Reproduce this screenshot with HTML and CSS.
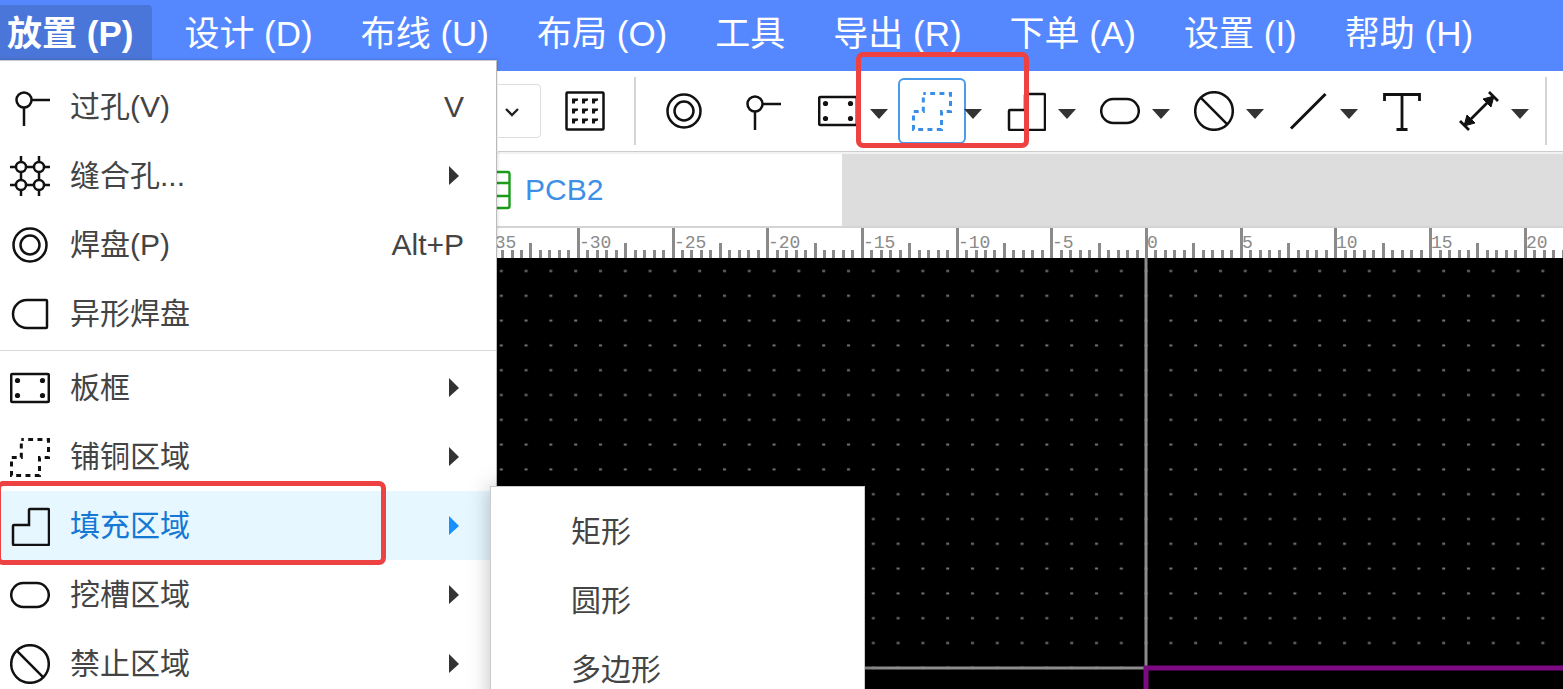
FILE: index.html
```html
<!DOCTYPE html>
<html lang="zh-CN">
<head>
    <meta charset="UTF-8">
    <meta name="viewport" content="width=device-width, initial-scale=1.0">
    <title>PCB2</title>
    <link rel="stylesheet" href="styles.css">
</head>
<body>
    <!-- shared icons, all on a 40x40 grid -->
    <svg class="sprite" aria-hidden="true">
        <symbol id="i-via" viewBox="0 0 40 40">
            <circle cx="14" cy="13" r="7.5"/>
            <path d="M21.5 13H40M14 20.5V39"/>
        </symbol>
        <symbol id="i-stitch" viewBox="0 0 40 40">
            <circle cx="11" cy="11" r="5"/>
            <circle cx="29" cy="11" r="5"/>
            <circle cx="11" cy="29" r="5"/>
            <circle cx="29" cy="29" r="5"/>
            <path d="M0 11H6M16 11H24M34 11H40M0 29H6M16 29H24M34 29H40M11 0V6M11 16V24M11 34V40M29 0V6M29 16V24M29 34V40"/>
        </symbol>
        <symbol id="i-pad" viewBox="0 0 40 40">
            <circle cx="20" cy="20" r="16.5"/>
            <circle cx="20" cy="20" r="9.5"/>
        </symbol>
        <symbol id="i-shape-pad" viewBox="0 0 40 40">
            <path d="M17 6H36a1 1 0 0 1 1 1V33a1 1 0 0 1-1 1H17A14 14 0 0 1 17 6z"/>
        </symbol>
        <symbol id="i-board" viewBox="0 0 40 40">
            <rect x="1.2" y="6" width="37.6" height="28" rx="1"/>
            <g fill="currentColor" stroke="none">
                <circle cx="7.5" cy="12.5" r="2.6"/>
                <circle cx="32.5" cy="12.5" r="2.6"/>
                <circle cx="7.5" cy="27.5" r="2.6"/>
                <circle cx="32.5" cy="27.5" r="2.6"/>
            </g>
        </symbol>
        <symbol id="i-pour" viewBox="0 0 40 40">
            <path stroke-width="3" stroke-dasharray="4.9 4.4" stroke-dashoffset="2.4" d="M11.3 2.5H38.5V20.5H29.5V38.5H1.5V20.5H11.3z"/>
        </symbol>
        <symbol id="i-fill" viewBox="0 0 40 40">
            <path d="M20 3H38a1 1 0 0 1 1 1V38a1 1 0 0 1-1 1H4a1 1 0 0 1-1-1V20a1 1 0 0 1 1-1H19V4a1 1 0 0 1 1-1z"/>
        </symbol>
        <symbol id="i-slot" viewBox="0 0 40 40">
            <rect x="1.2" y="8" width="37.6" height="24" rx="12"/>
        </symbol>
        <symbol id="i-ban" viewBox="0 0 40 40">
            <circle cx="20" cy="20" r="18.8"/>
            <path d="M6.7 6.7L33.3 33.3"/>
        </symbol>
        <symbol id="i-grid" viewBox="0 0 40 40">
            <rect x="1.5" y="1.5" width="37" height="37" rx="1"/>
            <path fill="currentColor" stroke="none" d="M7 7.5h6v2l-3 1v2h-3zM17 7.5h6v2l-3 1v2h-3zM27 7.5h6v2l-3 1v2h-3zM7 17.5h6v2l-3 1v2h-3zM17 17.5h6v2l-3 1v2h-3zM27 17.5h6v2l-3 1v2h-3zM7 27.5h6v2l-3 1v2h-3zM17 27.5h6v2l-3 1v2h-3zM27 27.5h6v2l-3 1v2h-3z"/>
        </symbol>
        <symbol id="i-line" viewBox="0 0 40 40">
            <path stroke-width="3" d="M3 37.5L37.5 3"/>
        </symbol>
        <symbol id="i-text" viewBox="0 0 40 40">
            <path stroke-width="2.8" d="M2.5 10V3.5H37.5V10M20 3.5V38.5M14.5 38.5H25.5"/>
        </symbol>
        <symbol id="i-dim" viewBox="0 0 40 40">
            <path stroke-width="2.8" d="M5 35L35 5M30 1L39 10M1 30L10 39"/>
            <path fill="currentColor" d="M35 5L24 8L32 16zM5 35L8 24L16 32z" stroke-width="1"/>
        </symbol>
        <symbol id="i-caret" viewBox="0 0 18 40">
            <path fill="#333" stroke="none" d="M0 18H18L9 28z"/>
        </symbol>
        <symbol id="i-arrow" viewBox="0 0 15 20">
            <path fill="currentColor" stroke="none" d="M0 0L10 10L0 19z"/>
        </symbol>
    </svg>

    <nav class="menubar">
        <button class="menubar-item active">放置 (P)</button>
        <button class="menubar-item">设计 (D)</button>
        <button class="menubar-item">布线 (U)</button>
        <button class="menubar-item">布局 (O)</button>
        <button class="menubar-item">工具</button>
        <button class="menubar-item">导出 (R)</button>
        <button class="menubar-item">下单 (A)</button>
        <button class="menubar-item">设置 (I)</button>
        <button class="menubar-item">帮助 (H)</button>

        <ul class="menu">
            <li><button class="menu-item"><svg class="icon"><use href="#i-via"/></svg>过孔(V)<span class="shortcut">V</span></button></li>
            <li><button class="menu-item"><svg class="icon"><use href="#i-stitch"/></svg>缝合孔...<svg class="arrow"><use href="#i-arrow"/></svg></button></li>
            <li><button class="menu-item"><svg class="icon"><use href="#i-pad"/></svg>焊盘(P)<span class="shortcut">Alt+P</span></button></li>
            <li><button class="menu-item"><svg class="icon"><use href="#i-shape-pad"/></svg>异形焊盘</button></li>
            <li class="divider"></li>
            <li><button class="menu-item"><svg class="icon"><use href="#i-board"/></svg>板框<svg class="arrow"><use href="#i-arrow"/></svg></button></li>
            <li><button class="menu-item"><svg class="icon"><use href="#i-pour"/></svg>铺铜区域<svg class="arrow"><use href="#i-arrow"/></svg></button></li>
            <li class="open">
                <button class="menu-item"><svg class="icon"><use href="#i-fill"/></svg>填充区域<svg class="arrow"><use href="#i-arrow"/></svg></button>
                <span class="mark mark-menu"></span>
                <ul class="submenu">
                    <li><button class="menu-item">矩形</button></li>
                    <li><button class="menu-item">圆形</button></li>
                    <li><button class="menu-item">多边形</button></li>
                </ul>
            </li>
            <li><button class="menu-item"><svg class="icon"><use href="#i-slot"/></svg>挖槽区域<svg class="arrow"><use href="#i-arrow"/></svg></button></li>
            <li><button class="menu-item"><svg class="icon"><use href="#i-ban"/></svg>禁止区域<svg class="arrow"><use href="#i-arrow"/></svg></button></li>
        </ul>
    </nav>

    <div class="toolbar">
        <div class="select-box">
            <select aria-label="单位"><option></option></select>
            <svg class="chevron" viewBox="0 0 16 10"><path d="M2 2L8 8L14 2"/></svg>
        </div>
        <button class="tool" aria-label="网格"><svg class="icon"><use href="#i-grid"/></svg></button>
        <span class="separator"></span>
        <button class="tool" aria-label="焊盘"><svg class="icon"><use href="#i-pad"/></svg></button>
        <button class="tool" aria-label="过孔"><svg class="icon"><use href="#i-via"/></svg></button>
        <div class="split">
            <button class="tool" aria-label="板框"><svg class="icon"><use href="#i-board"/></svg></button>
            <button class="caret" aria-label="更多板框"><svg><use href="#i-caret"/></svg></button>
        </div>
        <div class="split">
            <button class="tool selected" aria-label="铺铜区域"><svg class="icon"><use href="#i-pour"/></svg></button>
            <button class="caret" aria-label="更多铺铜"><svg><use href="#i-caret"/></svg></button>
        </div>
        <div class="split">
            <button class="tool" aria-label="填充区域"><svg class="icon"><use href="#i-fill"/></svg></button>
            <button class="caret" aria-label="更多填充"><svg><use href="#i-caret"/></svg></button>
        </div>
        <div class="split">
            <button class="tool" aria-label="挖槽区域"><svg class="icon"><use href="#i-slot"/></svg></button>
            <button class="caret" aria-label="更多挖槽"><svg><use href="#i-caret"/></svg></button>
        </div>
        <div class="split">
            <button class="tool" aria-label="禁止区域"><svg class="icon"><use href="#i-ban"/></svg></button>
            <button class="caret" aria-label="更多禁止"><svg><use href="#i-caret"/></svg></button>
        </div>
        <div class="split">
            <button class="tool" aria-label="线条"><svg class="icon"><use href="#i-line"/></svg></button>
            <button class="caret" aria-label="更多线条"><svg><use href="#i-caret"/></svg></button>
        </div>
        <button class="tool" aria-label="文本"><svg class="icon"><use href="#i-text"/></svg></button>
        <div class="split">
            <button class="tool" aria-label="尺寸"><svg class="icon"><use href="#i-dim"/></svg></button>
            <button class="caret" aria-label="更多尺寸"><svg><use href="#i-caret"/></svg></button>
        </div>
        <span class="separator"></span>
        <span class="mark mark-tool"></span>
    </div>

    <div class="tabs">
        <button class="tab">
            <svg class="tab-icon" viewBox="0 0 36 40"><rect x="1.5" y="2" width="33" height="36" rx="2"/><path d="M18 2V38M18 13H34M18 26H34"/></svg>
            PCB2
        </button>
    </div>

    <svg class="ruler" id="ruler"></svg>

    <svg class="board">
        <defs>
            <pattern id="dots" x="1133.6" y="397.4" width="24.8" height="24.8" patternUnits="userSpaceOnUse">
                <rect x="11" y="11.4" width="3" height="2" fill="#787878"/>
            </pattern>
        </defs>
        <rect width="100%" height="100%" fill="url(#dots)"/>
        <path class="axis" d="M1146 0V410M0 410H1146"/>
        <path class="outline" d="M1146 500V410H4000"/>
    </svg>

    <script>
        const SVG_NS = 'http://www.w3.org/2000/svg';
        const ORIGIN = 1146;
        const STEP = 9.47; // px between two small ticks
        const ruler = document.getElementById('ruler');

        function addTick(x, height) {
            const tick = document.createElementNS(SVG_NS, 'rect');
            tick.setAttribute('x', x - 1);
            tick.setAttribute('y', 30 - height);
            tick.setAttribute('width', 3);
            tick.setAttribute('height', height);
            ruler.appendChild(tick);
        }

        function addLabel(x, value) {
            const label = document.createElementNS(SVG_NS, 'text');
            label.setAttribute('x', x + 1);
            label.setAttribute('y', 20);
            label.textContent = value;
            ruler.appendChild(label);
        }

        for (let i = -70; ORIGIN + i * STEP < ruler.clientWidth; i++) {
            const x = Math.round(ORIGIN + i * STEP);
            if (i % 10 === 0) {
                addTick(x, 30);
                addLabel(x, i / 2);
            } else if (i % 5 === 0) {
                addTick(x, 15);
            } else {
                addTick(x, 8);
            }
        }
    </script>
</body>
</html>
```

FILE: styles.css
```css
* {
    box-sizing: border-box;
}

body {
    margin: 0;
    height: 100vh;
    display: flex;
    flex-direction: column;
    overflow: hidden;
    background: #fff;
    color: #444;
    font-family: "Liberation Sans", "Noto Sans CJK SC", sans-serif;
    font-size: 30px;
}

button {
    margin: 0;
    padding: 0;
    border: none;
    background: none;
    color: inherit;
    font: inherit;
    cursor: pointer;
}

ul {
    margin: 0;
    padding: 0;
    list-style: none;
}

.sprite {
    position: absolute;
    width: 0;
    height: 0;
}

.icon {
    flex: none;
    width: 40px;
    height: 40px;
    fill: none;
    stroke: currentColor;
    stroke-width: 2.5;
    color: #111;
}

/* menu bar */
.menubar {
    position: relative;
    z-index: 2;
    flex: none;
    display: flex;
    gap: 16px;
    height: 71px;
    padding-top: 5px;
    background: #5588ff;
}

.menubar-item {
    height: 55px;
    padding: 3px 16px 0;
    color: #fff;
    font-size: 35px;
    line-height: 52px;
    white-space: nowrap;
}

.menubar-item.active {
    padding-left: 7px;
    padding-right: 19px;
    border-radius: 0 4px 0 0;
    background: #4a76d9;
    font-weight: bold;
}

/* dropdown */
.menu {
    position: absolute;
    top: 60px;
    left: 0;
    width: 497px;
    height: calc(100vh - 60px);
    padding-top: 11px;
    border-top: 1px solid #ccc;
    border-right: 1px solid #bbb;
    background: #fff;
    box-shadow: 0 0 4px rgba(0, 0, 0, 0.2);
}

.menu-item {
    display: flex;
    align-items: center;
    gap: 20px;
    width: 100%;
    height: 69px;
    padding: 0 32px 0 10px;
    line-height: 30px;
    text-align: left;
}

.shortcut {
    margin-left: auto;
}

.arrow {
    width: 15px;
    height: 20px;
    margin-left: auto;
    color: #333;
}

.divider {
    height: 1px;
    margin: 2px 0;
    background: #d8d8d8;
}

.open {
    position: relative;
    background: #e6f7ff;
    color: #1478d4;
}

.open .arrow {
    color: #1890ff;
}

.submenu {
    position: absolute;
    top: -5px;
    left: 490px;
    width: 375px;
    padding: 10px 0;
    border: 1px solid #ccc;
    background: #fff;
    color: #444;
    box-shadow: 0 0 20px rgba(0, 0, 0, 0.25);
}

.submenu .menu-item {
    padding-left: 80px;
}

/* red highlight frames */
.mark {
    position: absolute;
    border: 5px solid #ee4142;
    border-radius: 7px;
    pointer-events: none;
}

.mark-menu {
    top: -10px;
    left: -4px;
    width: 390px;
    height: 84px;
}

.mark-tool {
    top: -19px;
    left: 856px;
    width: 173px;
    height: 96px;
    z-index: 3;
}

/* toolbar */
.toolbar {
    position: relative;
    z-index: 3;
    flex: none;
    display: flex;
    align-items: center;
    height: 81px;
    padding-left: 501px;
    border-bottom: 1px solid #ccc;
    background: #fff;
    clip-path: inset(-20px 0 0 498px);
}

.select-box {
    position: relative;
    width: 40px;
    height: 54px;
    margin-right: 10px;
}

.select-box select {
    position: absolute;
    right: 0;
    width: 140px;
    height: 54px;
    border: 1px solid #ddd;
    border-radius: 4px;
    background: #fff;
    appearance: none;
}

.chevron {
    position: absolute;
    top: 23px;
    right: 21px;
    width: 16px;
    height: 10px;
    fill: none;
    stroke: #222;
    stroke-width: 2.4;
}

.tool {
    flex: none;
    display: flex;
    align-items: center;
    justify-content: center;
    width: 68px;
    height: 66px;
    margin-right: 9px;
    border-radius: 6px;
}

.tool.selected {
    border: 2px solid #4a9be8;
}

.tool.selected .icon {
    color: #3a8ee6;
}

.split {
    flex: none;
    display: flex;
    align-items: center;
    margin-right: 10px;
}

.split .tool {
    margin-right: -2px;
}

.caret,
.caret svg {
    display: block;
    width: 18px;
    height: 40px;
}

.separator {
    flex: none;
    width: 2px;
    height: 68px;
    margin: 0 14px 0 6px;
    background: #d4d4d4;
}

/* document tabs */
.tabs {
    flex: none;
    height: 76px;
    padding-top: 2px;
    border-bottom: 2px solid #d4d4d4;
    background: linear-gradient(#f2f2f2 2px, #ddd 2px);
}

.tab {
    display: flex;
    align-items: center;
    gap: 14px;
    width: 842px;
    height: 72px;
    padding-left: 475px;
    background: #fff;
    color: #3d8fe8;
}

.tab-icon {
    width: 36px;
    height: 40px;
    fill: none;
    stroke: #1a9c1a;
    stroke-width: 2.4;
}

/* drawing area */
.ruler {
    flex: none;
    display: block;
    width: 100%;
    height: 30px;
    background: #fff;
    fill: #8a8a8a;
    font-family: "Liberation Mono", monospace;
    font-size: 18px;
}

.board {
    flex: 1;
    display: block;
    width: 100%;
    min-height: 0;
    background: #000;
}

.axis {
    fill: none;
    stroke: #8c8c8c;
    stroke-width: 3;
}

.outline {
    fill: none;
    stroke: #7c0a80;
    stroke-width: 5;
}
```
